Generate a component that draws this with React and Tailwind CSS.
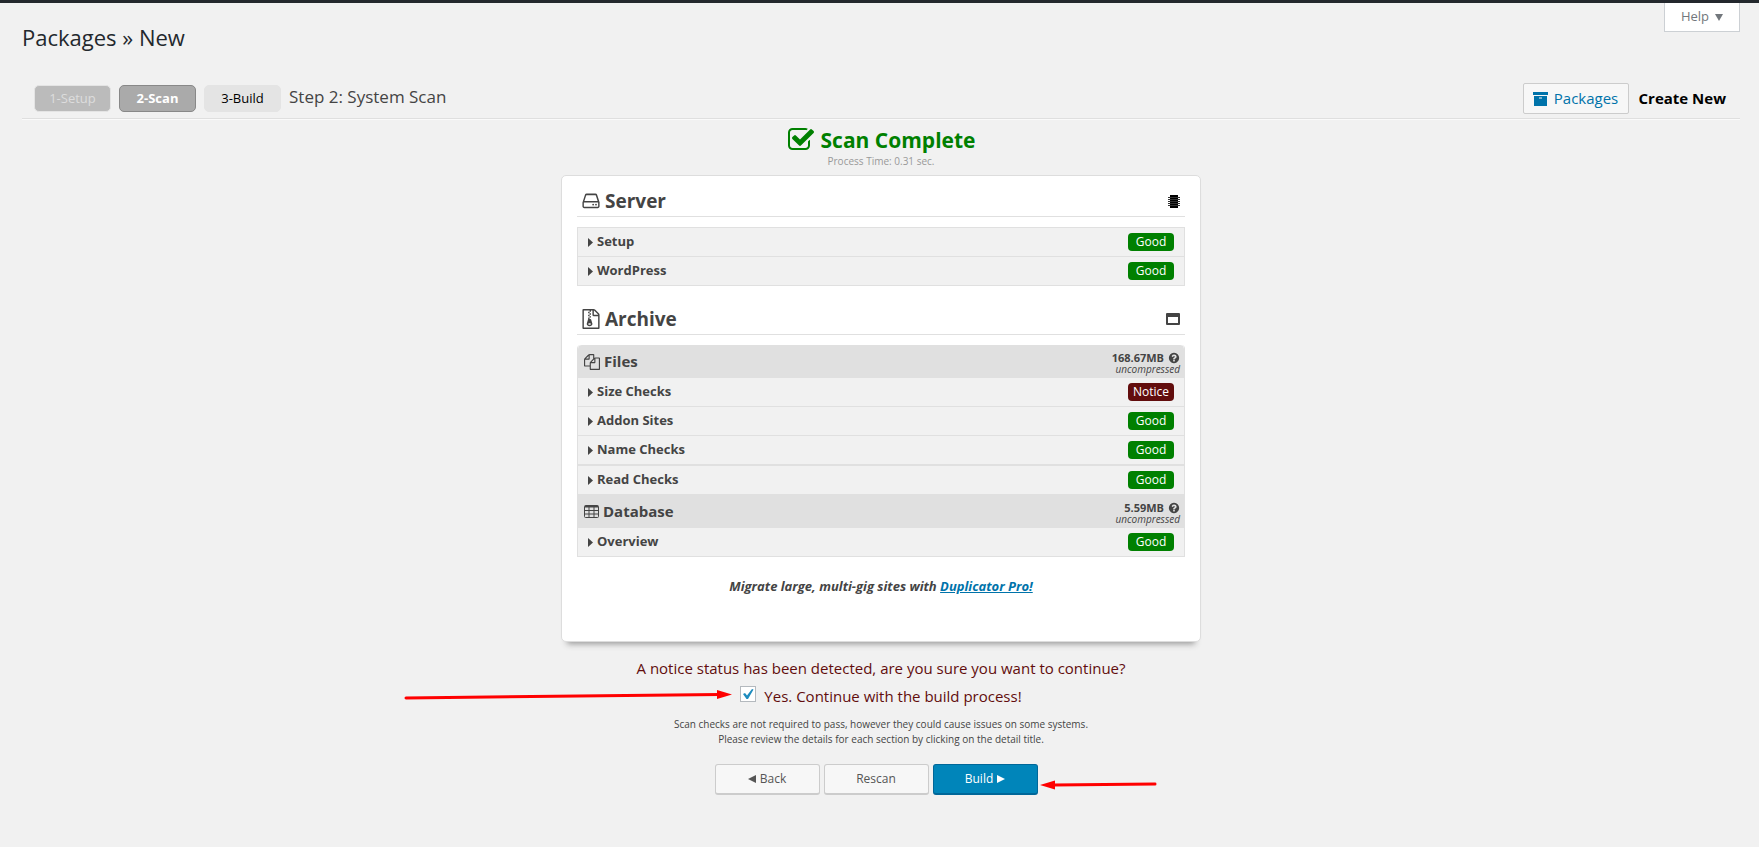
// src/App.jsx
import { useState } from "react";

const CHECK_SQUARE =
  "M1472 930v318q0 119-84.5 203.5t-203.5 84.5h-832q-119 0-203.5-84.5t-84.5-203.5v-832q0-119 84.5-203.5t203.5-84.5h832q63 0 117 25 15 7 18 23 3 17-9 29l-49 49q-10 10-23 10-3 0-9-2-23-6-45-6h-832q-66 0-113 47t-47 113v832q0 66 47 113t113 47h832q66 0 113-47t47-113v-254q0-13 9-22l64-64q10-10 23-10 6 0 12 3 20 8 20 29zm231-489l-814 814q-24 24-57 24t-57-24l-430-430q-24-24-24-57t24-57l110-110q24-24 57-24t57 24l263 263 647-647q24-24 57-24t57 24l110 110q24 24 24 57t-24 57z";
const HDD =
  "M1168 1216q0 33-23.5 56.5t-56.5 23.5-56.5-23.5-23.5-56.5 23.5-56.5 56.5-23.5 56.5 23.5 23.5 56.5zm256 0q0 33-23.5 56.5t-56.5 23.5-56.5-23.5-23.5-56.5 23.5-56.5 56.5-23.5 56.5 23.5 23.5 56.5zm112 160v-320q0-13-9.5-22.5t-22.5-9.5h-1216q-13 0-22.5 9.5t-9.5 22.5v320q0 13 9.5 22.5t22.5 9.5h1216q13 0 22.5-9.5t9.5-22.5zm-1230-480h1180l-157-482q-4-13-16-21.5t-26-8.5h-782q-14 0-26 8.5t-16 21.5zm1358 160v320q0 66-47 113t-113 47h-1216q-66 0-113-47t-47-113v-320q0-49 30-112l197-606q16-50 59-81t96-31h782q53 0 96 31t59 81l197 606q30 63 30 112z";
const FILE_ARCHIVE =
  "M768 384v-128h-128v128h128zm128 128v-128h-128v128h128zm-128 128v-128h-128v128h128zm128 128v-128h-128v128h128zm700-388q28 28 48 76t20 88v1152q0 40-28 68t-68 28h-1344q-40 0-68-28t-28-68v-1600q0-40 28-68t68-28h896q40 0 88 20t76 48zm-444-244v376h376q-10-29-22-41l-313-313q-12-12-41-22zm384 1528v-1024h-416q-40 0-68-28t-28-68v-416h-128v128h-128v-128h-512v1536h1280zm-627-721l107 349q8 27 8 52 0 83-72.5 137.5t-183.5 54.5-183.5-54.5-72.5-137.5q0-25 8-52 21-63 120-396v-128h128v128h79q22 0 41 13t25 34zm-141 465q53 0 90.5-19t37.5-45-37.5-45-90.5-19-90.5 19-37.5 45 37.5 45 90.5 19z";
const FILES =
  "M1696 384q40 0 68 28t28 68v1216q0 40-28 68t-68 28h-960q-40 0-68-28t-28-68v-288h-544q-40 0-68-28t-28-68v-672q0-40 20-88t48-76l408-408q28-28 76-48t88-20h416q40 0 68 28t28 68v328q68-40 128-40h416zm-544 213l-299 299h299v-299zm-640-384l-299 299h299v-299zm196 647l316-316v-416h-384v416q0 40-28 68t-68 28h-416v640h512v-256q0-40 20-88t48-76zm956 804v-1152h-384v416q0 40-28 68t-68 28h-416v640h896z";
const QUESTION =
  "M1024 1376v-192q0-14-9-23t-23-9h-192q-14 0-23 9t-9 23v192q0 14 9 23t23 9h192q14 0 23-9t9-23zm256-672q0-88-55.5-163t-138.5-116-170-41q-243 0-371 213-15 24 8 42l132 100q7 6 19 6 16 0 25-12 53-68 86-92 34-24 86-24 48 0 85.5 26t37.5 59q0 38-20 61t-68 45q-63 28-115.5 86.5t-52.5 125.5v36q0 14 9 23t23 9h192q14 0 23-9t9-23q0-19 21.5-49.5t54.5-49.5q32-18 49-28.5t46-35 44.5-48 28-60.5 12.5-81zm384 192q0 209-103 385.5t-279.5 279.5-385.5 103-385.5-103-279.5-279.5-103-385.5 103-385.5 279.5-279.5 385.5-103 385.5 103 279.5 279.5 103 385.5z";

function Icon({ d, className }) {
  return (
    <svg viewBox="0 0 1792 1792" fill="currentColor" className={className} aria-hidden="true">
      <path d={d} />
    </svg>
  );
}

function TableIcon() {
  return (
    <svg viewBox="0 0 15 13" className="w-[15px] h-[13px]" fill="none" stroke="currentColor" aria-hidden="true">
      <rect x="0.5" y="0.5" width="14" height="12" rx="1" />
      <path d="M1 1.5h13" strokeWidth="2" />
      <path d="M1 5.5h13M1 9h13M5 2v10M10 2v10" />
    </svg>
  );
}

function ChipIcon() {
  return (
    <svg viewBox="0 0 12 13" className="w-3 h-[13px]" fill="none" aria-hidden="true">
      <rect x="2" width="8" height="13" fill="#000" />
      <path d="M0 2.5h12M0 4.5h12M0 6.5h12M0 8.5h12M0 10.5h12" stroke="#333" />
    </svg>
  );
}

function WindowIcon() {
  return (
    <svg viewBox="0 0 14 12" className="w-3.5 h-3" fill="currentColor" aria-hidden="true">
      <path fillRule="evenodd" d="M1 0h12a1 1 0 0 1 1 1v10a1 1 0 0 1-1 1H1a1 1 0 0 1-1-1V1a1 1 0 0 1 1-1zM2 4v6h10V4z" />
    </svg>
  );
}

function ArchiveIcon() {
  return (
    <svg viewBox="0 0 15 14" className="w-[15px] h-3.5" fill="currentColor" aria-hidden="true">
      <path d="M0 0h15v3H0z" />
      <path fillRule="evenodd" d="M1 4h13v10H1zM6 5.5v1h3v-1z" />
    </svg>
  );
}

function CheckRow({ title, status = "Good", className = "h-[29px] border-t" }) {
  return (
    <button
      type="button"
      className={`flex w-full items-center justify-between bg-[#f1f1f1] border-[#e0e0e0] px-2.5 text-left ${className}`}
    >
      <span className="flex items-center gap-1 text-[13px] font-bold">
        <svg viewBox="0 0 5 9" className="w-[5px] h-[9px]" fill="currentColor" aria-hidden="true">
          <path d="M0 0l5 4.5-5 4.5z" />
        </svg>
        {title}
      </span>
      <span
        className={`w-[46px] h-[18px] rounded text-center text-[12px] leading-[18px] text-white ${
          status === "Good" ? "bg-[#008000]" : "bg-[#620d0d]"
        }`}
      >
        {status}
      </span>
    </button>
  );
}

function GroupHeader({ icon, title, size, className }) {
  return (
    <div className={`flex items-center justify-between bg-[#e0e0e0] pl-1.5 pr-1 ${className}`}>
      <h3 className="flex items-center gap-1 text-[15px] font-bold">
        {icon}
        {title}
      </h3>
      <div className="pt-1 text-right">
        <div className="flex items-center justify-end gap-1 text-[11px] leading-3 font-bold">
          {size}
          <Icon d={QUESTION} className="w-3 h-3" />
        </div>
        <div className="text-[10px] leading-[11px] italic">uncompressed</div>
      </div>
    </div>
  );
}

function SectionTitle({ icon, title, action }) {
  return (
    <div className="flex h-[29px] items-center justify-between border-b border-[#e0e0e0] pl-1 pr-[5px] pb-0.5">
      <h2 className="flex items-center gap-1 text-[19px] font-bold">
        {icon}
        {title}
      </h2>
      {action}
    </div>
  );
}

export default function App() {
  const [confirmed, setConfirmed] = useState(true);

  return (
    <div className="min-h-screen bg-[#f1f1f1] border-t-3 border-[#23282d] text-[#444] font-['Open_Sans','Noto_Sans',sans-serif]">
      <header className="flex items-start justify-between pl-[22px] pr-[19px]">
        <h1 className="pt-4 text-[22px] leading-9 text-[#23282d]">Packages » New</h1>
        <button
          type="button"
          className="flex h-[29px] w-[76px] items-center justify-center gap-1.5 border border-t-0 border-[#ccd0d4] bg-white text-[13px] text-[#72777c]"
        >
          Help
          <svg viewBox="0 0 8 7" className="w-2 h-[7px]" fill="currentColor" aria-hidden="true">
            <path d="M0 0h8L4 7z" />
          </svg>
        </button>
      </header>

      <main className="ml-[22px] mr-[19px]">
        <div className="mt-6 flex h-10 items-center justify-between border-b border-[#dfdfdf] pl-3 pr-3.5 shadow-[0_1px_0_#fafafa]">
          <div className="flex items-center gap-2 text-[13px]">
            <span className="w-[77px] rounded-[5px] border border-[#e4e4e4] bg-[#bbb] text-center leading-[25px] text-[#ddd]">
              1-Setup
            </span>
            <span className="w-[77px] rounded-[5px] border border-[#888] bg-[#aaa] text-center leading-[25px] font-bold text-white">
              2-Scan
            </span>
            <span className="w-[77px] rounded-[5px] border border-[#e4e4e4] bg-[#e4e4e4] text-center leading-[25px] text-black">
              3-Build
            </span>
            <span className="pb-1 text-[17px]">Step 2: System Scan</span>
          </div>
          <div className="flex items-center gap-2.5 text-[15px]">
            <a
              href="#packages"
              className="flex h-[31px] w-[106px] items-center justify-center gap-1.5 rounded-xs border border-[#ccc] bg-[#f7f7f7] text-[#0073aa]"
            >
              <ArchiveIcon />
              Packages
            </a>
            <span className="font-bold text-black">Create New</span>
          </div>
        </div>

        <div className="mx-auto mt-[7px] w-full max-w-[640px]">
          <div className="flex items-center justify-center gap-1.5 text-[21px] leading-7 font-bold text-[#008000]">
            <Icon d={CHECK_SQUARE} className="w-7 h-7" />
            Scan Complete
          </div>
          <div className="text-center text-[10px] leading-[15px] text-[#999]">Process Time: 0.31 sec.</div>

          <section className="mt-1.5 rounded-[5px] border border-[#ddd] bg-white px-[15px] pt-3 pb-[45px] shadow-[0_8px_6px_-6px_#999]">
            <SectionTitle
              icon={<Icon d={HDD} className="w-5 h-5" />}
              title="Server"
              action={<ChipIcon />}
            />
            <div className="mt-2.5 border border-t-0 border-[#e0e0e0]">
              <CheckRow title="Setup" />
              <CheckRow title="WordPress" />
            </div>

            <div className="mt-5">
              <SectionTitle
                icon={<Icon d={FILE_ARCHIVE} className="w-5 h-5" />}
                title="Archive"
                action={<WindowIcon />}
              />
            </div>
            <div className="mt-2.5 overflow-hidden rounded-t border border-t-0 border-[#e0e0e0]">
              <GroupHeader
                icon={<Icon d={FILES} className="w-4 h-4" />}
                title="Files"
                size="168.67MB"
                className="h-[33px] rounded-t"
              />
              <CheckRow title="Size Checks" status="Notice" className="h-7" />
              <CheckRow title="Addon Sites" />
              <CheckRow title="Name Checks" />
              <CheckRow title="Read Checks" className="h-[30px] border-t-2" />
              <GroupHeader icon={<TableIcon />} title="Database" size="5.59MB" className="h-[34px]" />
              <CheckRow title="Overview" className="h-7" />
            </div>

            <p className="mt-[19px] text-center text-[13px] leading-5 font-bold italic">
              Migrate large, multi-gig sites with{" "}
              <a href="#pro" className="text-[#0073aa] underline">
                Duplicator Pro!
              </a>
            </p>
          </section>
        </div>

        <div className="mt-3 text-center">
          <p className="text-[15px] leading-7 text-[#620d0d]">
            A notice status has been detected, are you sure you want to continue?
          </p>
          <label className="relative mx-auto flex w-fit items-center gap-2 text-[15px] leading-7 text-[#620d0d]">
            <span className="grid place-items-center pb-1">
              <input
                type="checkbox"
                checked={confirmed}
                onChange={(e) => setConfirmed(e.target.checked)}
                className="col-start-1 row-start-1 h-4 w-4 appearance-none border border-[#b4b9be] bg-white"
              />
              {confirmed && (
                <svg viewBox="0 0 12 12" className="col-start-1 row-start-1 h-3 w-3 pointer-events-none" aria-hidden="true">
                  <path d="M1 6l2-1 2 2.5L10 1l1.5.5L6 11H4.5z" fill="#1e8cbe" />
                </svg>
              )}
            </span>
            Yes. Continue with the build process!
            <svg
              viewBox="0 0 328 12"
              className="pointer-events-none absolute right-full mr-2 h-3 w-[328px] max-w-none"
              aria-hidden="true"
            >
              <path d="M2 8L316 4.5" stroke="#f00" strokeWidth="3" strokeLinecap="round" />
              <path d="M328 4.5l-15-4.5v9z" fill="#f00" />
            </svg>
          </label>
          <p className="mt-[7px] text-[10px] leading-[15px]">
            Scan checks are not required to pass, however they could cause issues on some systems.
            <br />
            Please review the details for each section by clicking on the detail title.
          </p>

          <div className="mt-[17px] flex justify-center pr-2.5 text-[12px] text-[#555]">
            <div className="relative flex gap-1">
              <button
                type="button"
                className="flex h-[31px] w-[105px] items-center justify-center gap-1 rounded-[3px] border border-b-2 border-[#ccc] bg-[#f7f7f7]"
              >
                <svg viewBox="0 0 8 8" className="h-2 w-2" fill="currentColor" aria-hidden="true">
                  <path d="M8 0v8L0 4z" />
                </svg>
                Back
              </button>
              <button
                type="button"
                className="h-[31px] w-[105px] rounded-[3px] border border-b-2 border-[#ccc] bg-[#f7f7f7]"
              >
                Rescan
              </button>
              <button
                type="button"
                className="flex h-[31px] w-[105px] items-center justify-center gap-1 rounded-[3px] border border-b-2 border-[#006799] bg-[#0085ba] text-white"
              >
                Build
                <svg viewBox="0 0 8 8" className="h-2 w-2" fill="currentColor" aria-hidden="true">
                  <path d="M0 0v8l8-4z" />
                </svg>
              </button>
              <svg
                viewBox="0 0 117 10"
                className="pointer-events-none absolute left-full top-1/2 ml-0.5 h-2.5 w-[117px] max-w-none"
                aria-hidden="true"
              >
                <path d="M14 5L115 4" stroke="#f00" strokeWidth="3" strokeLinecap="round" />
                <path d="M0 5l15-4.5v9z" fill="#f00" />
              </svg>
            </div>
          </div>
        </div>
      </main>
    </div>
  );
}
